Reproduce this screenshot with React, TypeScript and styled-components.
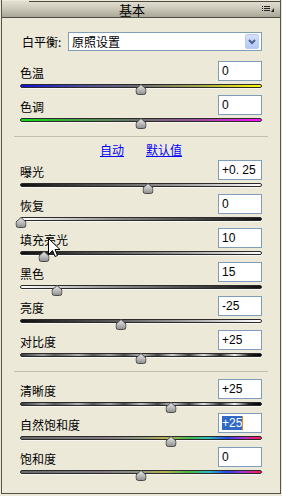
import React from 'react';
import styled, { createGlobalStyle } from 'styled-components';

const Global = createGlobalStyle`
  html, body { margin: 0; padding: 0; background: #ece9d8; }
  body { font-family: "Noto Sans CJK SC", sans-serif; }
`;

const Panel = styled.div`
  position: relative;
  width: 280px;
  height: 494px;
  margin: 0 1px;
  box-sizing: border-box;
  border-left: 1px solid #55544c;
  border-right: 1px solid #55544c;
  border-bottom: 1px solid #55544c;
  background: #ece9d8;
  display: flex;
  flex-direction: column;
  font-family: "Noto Sans CJK SC", sans-serif;
  font-size: 12px;
  color: #000;
`;

const Header = styled.div`
  height: 17px;
  flex: none;
  border-bottom: 1px solid #4d4c45;
  background:
    linear-gradient(#4d4c45, #4d4c45) 27px 1px / 100% 1px no-repeat,
    linear-gradient(#ece9d8, #ece9d8) 0 0 / 100% 1px no-repeat,
    linear-gradient(#e6e3d5 0%, #d2cfc0 40%, #a9a797 100%);
  display: flex;
  align-items: center;
`;

const Title = styled.div`
  flex: 1;
  text-align: center;
  font-size: 13px;
  line-height: 17px;
  padding-top: 1px;
`;

const MenuBox = styled.div`
  width: 18px;
  display: flex;
  align-items: center;
  justify-content: flex-start;
  padding-top: 2px;
`;

const Body = styled.div`
  padding: 0 18px;
  display: flex;
  flex-direction: column;
`;

const WBRow = styled.div`
  margin-top: 14px;
  height: 19px;
  display: flex;
  align-items: center;
  justify-content: space-between;
`;

const WBLabel = styled.span`
  padding-left: 2px;
  white-space: pre;
`;

const Select = styled.div`
  width: 194px;
  height: 19px;
  box-sizing: border-box;
  border: 1px solid #7f9db9;
  background: #fff;
  display: flex;
  align-items: center;
  justify-content: space-between;
  padding-left: 3px;
  padding-right: 2px;
  font-size: 12px;
`;

const DropBtn = styled.div`
  width: 14px;
  height: 15px;
  box-sizing: border-box;
  border: 1px solid #b9cbf3;
  border-radius: 2px;
  background: linear-gradient(#d6e2fc, #b3c8f5);
  display: flex;
  align-items: center;
  justify-content: center;
`;

const Params = styled.div<{ $top: number }>`
  margin-top: ${p => p.$top}px;
  display: flex;
  flex-direction: column;
`;

const LabelLine = styled.div`
  height: 20px;
  display: flex;
  align-items: center;
  justify-content: space-between;
`;

const Label = styled.span`
  position: relative;
  top: 1px;
`;

const ValueBox = styled.div`
  width: 44px;
  height: 20px;
  box-sizing: border-box;
  border: 1px solid #7f9db9;
  background: #fff;
  padding-left: 3px;
  display: flex;
  align-items: center;
  font-family: "Liberation Sans", sans-serif;
  font-size: 12px;
`;

const Selected = styled.span`
  background: #316ac5;
  color: #fff;
`;

const Caret = styled.span`
  display: inline-block;
  width: 1px;
  height: 14px;
  background: #e0900a;
`;

const SliderLine = styled.div`
  position: relative;
  height: 14px;
`;

const Track = styled.div<{ $bg: string }>`
  margin-top: 3px;
  height: 2px;
  border: 1px solid #2b2b2b;
  border-radius: 2px;
  background: ${p => p.$bg};
  box-shadow: 0 1px 0 rgba(255, 255, 255, 0.6);
`;

const ThumbWrap = styled.div`
  position: absolute;
  top: 0;
  width: 11px;
  height: 11px;
  transform: translateX(-50%);
`;

const Divider = styled.div<{ $top: number }>`
  margin: ${p => p.$top}px -6px 0;
  height: 1px;
  background: #c3c0af;
`;

const LinkRow = styled.div`
  height: 23px;
  display: flex;
  align-items: center;
  justify-content: center;
  gap: 22px;
`;

const Link = styled.a`
  color: #0000ff;
  text-decoration: underline;
  cursor: pointer;
  position: relative;
  top: 1px;
`;

const CursorWrap = styled.div`
  position: absolute;
  left: 46px;
  top: 238px;
  width: 13px;
  height: 21px;
`;

type P = {
  label: string;
  value: React.ReactNode;
  pos: number;
  bg: string;
};

const gray = 'linear-gradient(90deg,#111 0%,#555 35%,#9a9a9a 65%,#fff 100%)';
const grayR = 'linear-gradient(90deg,#fff 0%,#9a9a9a 35%,#555 65%,#111 100%)';
const stripe =
  'linear-gradient(90deg,#3a3a3a 0%,#6e6e6e 5%,#9a9a9a 9%,#5a5a5a 14%,#8a8a8a 20%,#b0b0b0 24%,#555 30%,#a0a0a0 37%,#4a4a4a 43%,#bdbdbd 50%,#444 57%,#d0d0d0 63%,#3c3c3c 70%,#e0e0e0 76%,#2e2e2e 83%,#eeeeee 89%,#1e1e1e 95%,#000 100%)';
const rainbow =
  'linear-gradient(90deg,#6a6a6a 0%,#777 20%,#857a82 35%,#8e9a7e 50%,#b9b152 60%,#48b848 70%,#2dbdbd 78%,#2846e6 86%,#b72ec8 93%,#ff1a4a 100%)';

const Thumb = () => (
  <svg width="11" height="11" viewBox="0 0 11 11">
    <defs>
      <linearGradient id="tg" x1="0" y1="0" x2="0" y2="1">
        <stop offset="0" stopColor="#ececec" />
        <stop offset="1" stopColor="#8e8e8e" />
      </linearGradient>
    </defs>
    <path
      d="M5.5 0.5 L10.5 5 L10.5 8 Q10.5 10.5 8 10.5 L3 10.5 Q0.5 10.5 0.5 8 L0.5 5 Z"
      fill="url(#tg)"
      stroke="#4a4a4a"
      strokeWidth="1"
    />
  </svg>
);

const Param = ({ label, value, pos, bg }: P) => (
  <>
    <LabelLine>
      <Label>{label}</Label>
      <ValueBox>{value}</ValueBox>
    </LabelLine>
    <SliderLine>
      <Track $bg={bg} />
      <ThumbWrap style={{ left: `calc(${pos}% )` }}>
        <Thumb />
      </ThumbWrap>
    </SliderLine>
  </>
);

const MenuIcon = () => (
  <svg width="13" height="8" viewBox="0 0 13 8">
    <rect x="0" y="0" width="1" height="1" fill="#222" />
    <rect x="2" y="0" width="6" height="1" fill="#222" />
    <rect x="0" y="2" width="1" height="1" fill="#222" />
    <rect x="2" y="2" width="6" height="1" fill="#222" />
    <rect x="0" y="4" width="1" height="1" fill="#222" />
    <rect x="2" y="4" width="6" height="1" fill="#222" />
    <path d="M12 2 L12 6 L9 6 Z" fill="#222" />
  </svg>
);

const Cursor = () => (
  <svg width="13" height="21" viewBox="0 0 13 21">
    <path
      d="M0.5 0.5 L0.5 16.5 L4.5 12.5 L7 18.5 L9.5 17.5 L7 11.5 L12 11.5 Z"
      fill="#fff"
      stroke="#000"
      strokeWidth="1"
      strokeLinejoin="miter"
    />
  </svg>
);

const wb: P[] = [
  { label: '色温', value: '0', pos: 50, bg: 'linear-gradient(90deg,#1010e0 0%,#4a4a9a 25%,#6e6e6e 50%,#a9a94a 75%,#ffff00 100%)' },
  { label: '色调', value: '0', pos: 50, bg: 'linear-gradient(90deg,#10e010 0%,#4a9a4a 25%,#6e6e6e 50%,#a04aa0 75%,#ff10ff 100%)' },
];

const tone: P[] = [
  { label: '曝光', value: '+0. 25', pos: 53, bg: gray },
  { label: '恢复', value: '0', pos: 0.3, bg: grayR },
  { label: '填充亮光', value: '10', pos: 10, bg: gray },
  { label: '黑色', value: '15', pos: 15.3, bg: grayR },
  { label: '亮度', value: '-25', pos: 41.7, bg: gray },
  { label: '对比度', value: '+25', pos: 49.8, bg: stripe },
];

const presence: P[] = [
  { label: '清晰度', value: '+25', pos: 62.5, bg: stripe },
  {
    label: '自然饱和度',
    value: (
      <>
        <Selected>+25</Selected>
        <Caret />
      </>
    ),
    pos: 62.5,
    bg: rainbow,
  },
  { label: '饱和度', value: '0', pos: 50, bg: rainbow },
];

export default function App() {
  return (
    <>
      <Global />
      <Panel>
        <Header>
          <Title>基本</Title>
          <MenuBox>
            <MenuIcon />
          </MenuBox>
        </Header>
        <Body>
          <WBRow>
            <WBLabel>白平衡:</WBLabel>
            <Select>
              <span>原照设置</span>
              <DropBtn>
                <svg width="8" height="6" viewBox="0 0 8 6">
                  <path d="M1 1 L4 4 L7 1" fill="none" stroke="#4d6185" strokeWidth="2" />
                </svg>
              </DropBtn>
            </Select>
          </WBRow>
          <Params $top={10}>
            {wb.map(p => (
              <Param key={p.label} {...p} />
            ))}
          </Params>
          <Divider $top={7} />
          <LinkRow>
            <Link>自动</Link>
            <Link>默认值</Link>
          </LinkRow>
          <Params $top={0}>
            {tone.map(p => (
              <Param key={p.label} {...p} />
            ))}
          </Params>
          <Divider $top={7} />
          <Params $top={7}>
            {presence.map(p => (
              <Param key={p.label} {...p} />
            ))}
          </Params>
        </Body>
        <CursorWrap>
          <Cursor />
        </CursorWrap>
      </Panel>
    </>
  );
}
